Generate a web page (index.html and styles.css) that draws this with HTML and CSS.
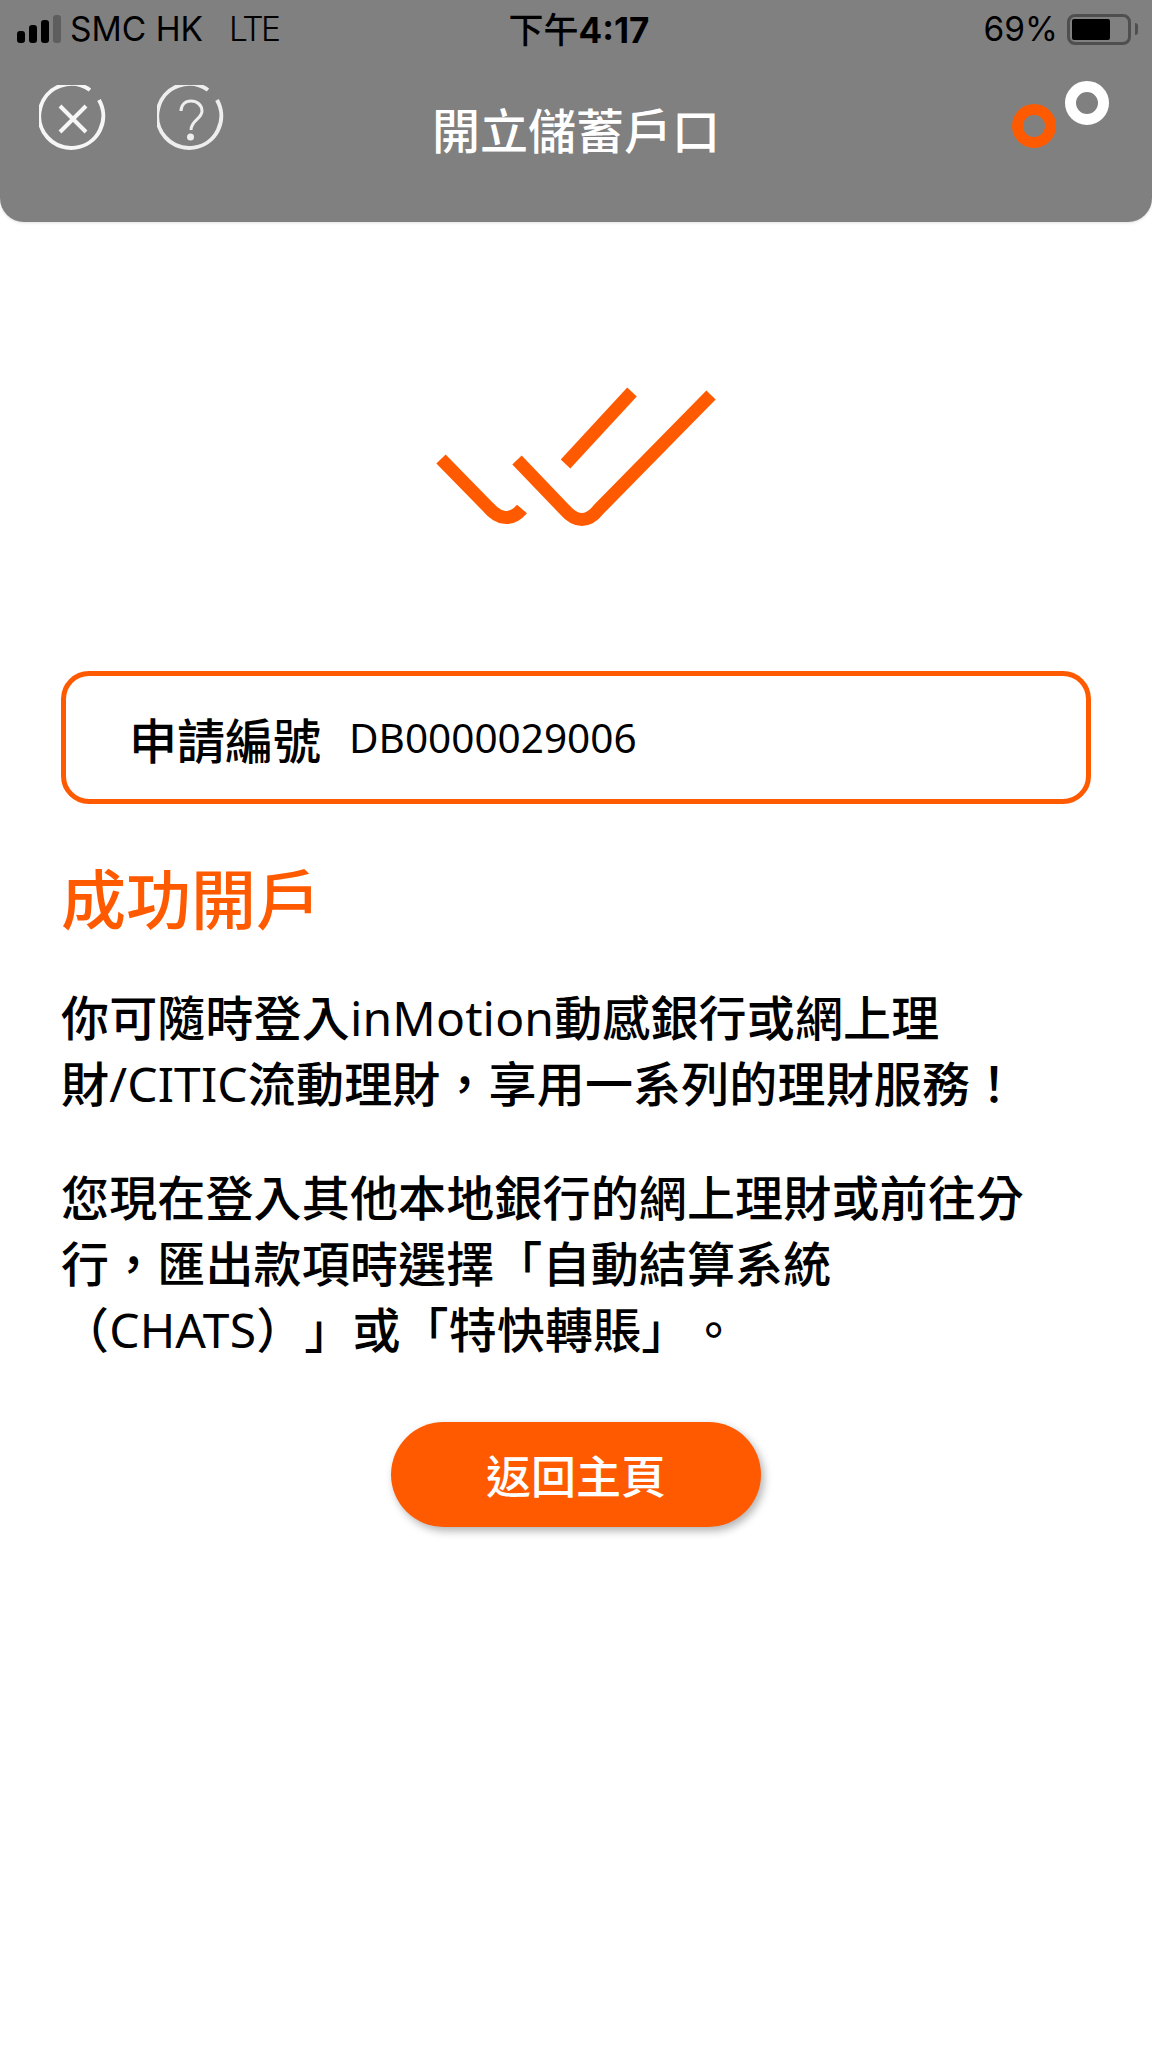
FILE: index.html
```html
<!DOCTYPE html>
<html lang="zh-Hant">
<head>
  <meta charset="UTF-8" />
  <title>開立儲蓄戶口</title>
  <link rel="stylesheet" href="styles.css">
</head>
<body>

  <header class="top-bar">
    <div class="status-bar">
      <div class="status-left">
        <span class="signal">
          <i class="bar bar-1"></i><i class="bar bar-2"></i><i class="bar bar-3"></i><i class="bar bar-4"></i>
        </span>
        <span class="carrier">SMC HK</span>
        <span class="network">LTE</span>
      </div>
      <div class="status-time"><span class="time-cjk">下午</span>4:17</div>
      <div class="status-right">
        <span>69%</span>
        <span class="battery"><i class="battery-level"></i></span>
        <i class="battery-tip"></i>
      </div>
    </div>

    <div class="nav-row">
      <div class="nav-icons">
        <svg class="nav-icon" viewBox="0 0 68 68" fill="none" stroke="#f6f6f6" stroke-width="4">
          <path d="M51 5A32 32 0 1 0 60 15" />
          <path d="M21 21L47 47M47 21L21 47" />
        </svg>
        <svg class="nav-icon" viewBox="0 0 68 68" fill="none" stroke="#eeeeee" stroke-width="4">
          <path d="M51 5A32 32 0 1 0 60 15" />
          <path d="M24 26C24 20 28 16 34 16C40 16 45 20 45 26C45 34 34 35 34 45" stroke-width="3" />
          <circle cx="33.5" cy="52" r="3.5" fill="#eeeeee" stroke="none" />
        </svg>
      </div>
      <h1 class="nav-title">開立儲蓄戶口</h1>
      <svg class="steps" viewBox="0 0 110 72" fill="none" stroke-width="11">
        <circle cx="24" cy="49" r="16.5" stroke="#ff5a00" />
        <circle cx="77" cy="26" r="16.5" stroke="#ffffff" />
      </svg>
    </div>
  </header>

  <main class="content">
    <svg class="tick" viewBox="0 0 290 145" fill="none" stroke="#ff5a00" stroke-width="13">
      <path d="M10 74L57 122C67 134 80 137 91 124" />
      <path d="M86 75L133 124C145 138 157 138 168 124L280 10" />
      <path d="M201 7L134.500 79" />
    </svg>

    <div class="ref-box">
      <span class="ref-label">申請編號</span>
      <span class="ref-number">DB0000029006</span>
    </div>

    <h2 class="success-title">成功開戶</h2>

    <p class="message">你可隨時登入<span class="latin">inMotion</span>動感銀行或網上理財<span class="latin">/CITIC</span>流動理財，享用一系列的理財服務！</p>
    <p class="message">您現在登入其他本地銀行的網上理財或前往分行，匯出款項時選擇「自動結算系統（<span class="latin">CHATS</span>）」或「特快轉賬」。</p>

    <div class="buttons-row">
      <button type="button" class="home-btn">返回主頁</button>
    </div>
  </main>

</body>
</html>
```

FILE: styles.css
```css
* {
  box-sizing: border-box;
}
body {
  margin: 0;
  height: 2048px;
  overflow: hidden;
  background-color: white;
  font-family: "Noto Sans", "Noto Sans CJK TC", sans-serif;
  color: black;
}
.top-bar {
  height: 222px;
  background-color: #808080;
  border-radius: 0 0 24px 24px;
  box-shadow: 0 1px 3px rgba(0, 0, 0, 0.12);
}
.status-bar {
  height: 58px;
  padding: 0 14px 0 17px;
  display: grid;
  grid-template-columns: 1fr auto 1fr;
  align-items: center;
  font-family: Inter, "Noto Sans CJK TC", sans-serif;
  font-size: 33.5px;
}
.status-left {
  display: flex;
  align-items: center;
}
.signal {
  display: flex;
  align-items: flex-end;
  gap: 4px;
  height: 28px;
  margin-right: 9px;
}
.bar {
  width: 8px;
  background-color: black;
  border-radius: 3px;
}
.bar-1 { height: 12px; }
.bar-2 { height: 18px; }
.bar-3 { height: 23px; }
.bar-4 { height: 28px; background-color: #5e5e5e; }
.network {
  margin-left: 26px;
  font-weight: 300;
  letter-spacing: -2.5px;
}
.status-time {
  margin: 0 0 4px 3px;
  font-size: 35px;
  font-weight: 700;
}
.time-cjk {
  font-weight: 500;
}
.status-right {
  display: flex;
  align-items: center;
  justify-content: flex-end;
}
.battery {
  width: 64px;
  height: 31px;
  margin-left: 9px;
  padding: 2px;
  border: 3px solid #4f4f4f;
  border-radius: 8px;
}
.battery-level {
  display: block;
  width: 38px;
  height: 100%;
  background-color: black;
  border-radius: 2px;
}
.battery-tip {
  width: 3px;
  height: 12px;
  margin-left: 4px;
  background-color: #4f4f4f;
  border-radius: 0 3px 3px 0;
}
.nav-row {
  display: grid;
  grid-template-columns: 1fr auto 1fr;
  align-items: flex-start;
  padding: 19px 39px 0 39px;
}
.nav-icons {
  display: flex;
  gap: 50px;
  margin-top: 8px;
}
.nav-icon {
  width: 68px;
  height: 68px;
}
.nav-title {
  margin: 24px 0 0 0;
  font-size: 48px;
  line-height: 60px;
  font-weight: 500;
  color: white;
}
.steps {
  justify-self: end;
  width: 110px;
  height: 72px;
  margin-right: -7px;
}
.content {
  padding: 0 61px;
}
.tick {
  display: block;
  width: 290px;
  height: 145px;
  margin: 163px auto 0 auto;
}
.ref-box {
  height: 133px;
  margin-top: 141px;
  padding-left: 63px;
  display: flex;
  align-items: center;
  border: 5px solid #ff5a00;
  border-radius: 28px;
}
.ref-label {
  font-size: 48px;
  font-weight: 500;
}
.ref-number {
  margin-left: 28px;
  font-size: 40.5px;
}
.success-title {
  margin: 57px 0 0 0;
  font-size: 65px;
  line-height: 76px;
  font-weight: 500;
  color: #ff5a00;
}
.message {
  margin: 0;
  font-size: 48px;
  line-height: 66px;
  font-weight: 500;
  letter-spacing: 0.15px;
  text-spacing-trim: space-all;
}
.latin {
  font-weight: 400;
}
.success-title + .message {
  margin-top: 48px;
}
.message + .message {
  margin-top: 48px;
}
.buttons-row {
  display: flex;
  justify-content: center;
  margin-top: 59px;
}
.home-btn {
  width: 370px;
  height: 105px;
  border: none;
  border-radius: 53px;
  background-color: #ff5a00;
  color: white;
  font-family: inherit;
  font-size: 45px;
  font-weight: 500;
  box-shadow: 3px 4px 8px rgba(0, 0, 0, 0.3);
}
```
